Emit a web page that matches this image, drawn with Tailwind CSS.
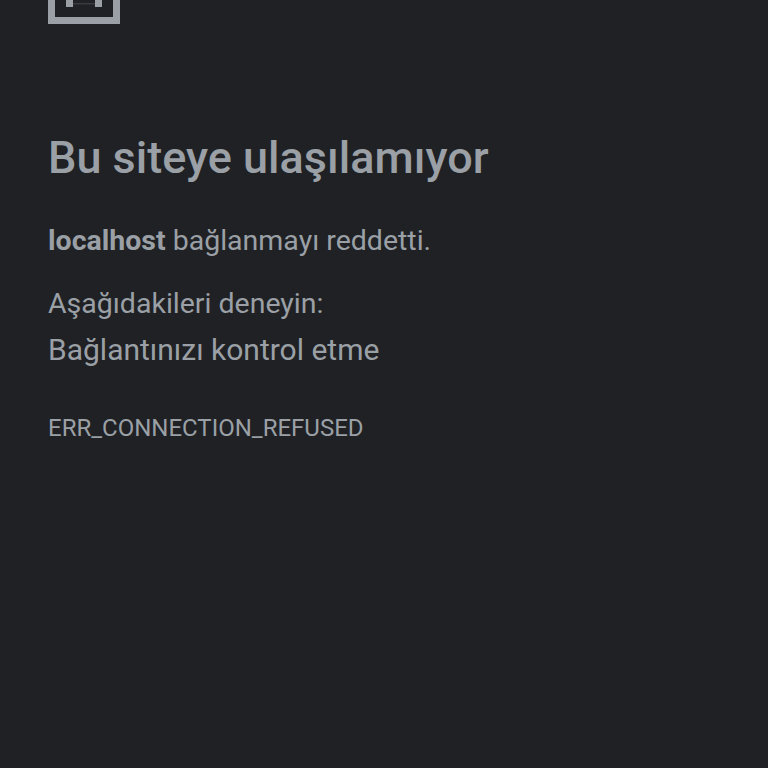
<!DOCTYPE html>
<html lang="tr">
<head>
<meta charset="utf-8">
<title>localhost</title>
<script src="https://cdn.jsdelivr.net/npm/@tailwindcss/browser@4"></script>
</head>
<body class="h-[768px] overflow-hidden bg-[#202124] font-['Roboto',sans-serif] text-[#9aa0a6]">
<main class="pl-12 -mt-[24px]">
  <!-- sad tab icon, cut off by the top edge -->
  <svg class="block w-[72px] h-[48px]" viewBox="0 0 72 48" fill="none">
    <path d="M0 0h72v48H0z M7 7v34h58V7z" fill="#9aa0a6" fill-rule="evenodd"/>
    <path d="M18 24h7v7h-7z M47 24h7v7h-7z" fill="#9aa0a6"/>
    <path d="M25 27h22v1.5H25z" fill="#9aa0a6" fill-opacity="0.2"/>
  </svg>
  <h1 class="mt-[108px] text-[45px] leading-[52px] font-medium">Bu siteye ulaşılamıyor</h1>
  <p class="mt-[37px] text-[28.5px] leading-[40px]"><strong class="font-bold">localhost</strong> bağlanmayı reddetti.</p>
  <p class="mt-[23px] text-[28.5px] leading-[40px]">Aşağıdakileri deneyin:</p>
  <p class="mt-[6px] text-[30px] leading-[40px]">Bağlantınızı kontrol etme</p>
  <p class="mt-[42px] text-[24px] leading-[32px]">ERR_CONNECTION_REFUSED</p>
</main>
</body>
</html>
